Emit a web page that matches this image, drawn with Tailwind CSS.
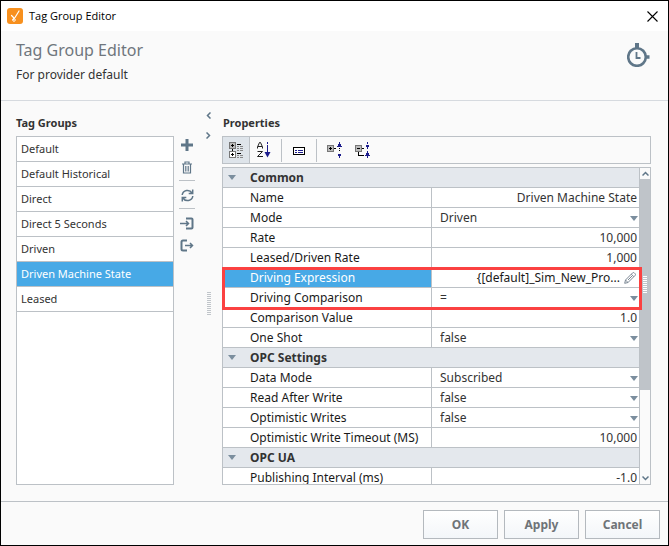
<!DOCTYPE html>
<html lang="en">
<head>
    <meta charset="UTF-8">
    <meta name="viewport" content="width=device-width, initial-scale=1.0">
    <title>Tag Group Editor</title>
    <script src="https://cdn.jsdelivr.net/npm/@tailwindcss/browser@4"></script>
</head>
<body class="h-screen flex flex-col border border-black bg-[#fafafa] font-['Noto_Sans',sans-serif] text-[12px] leading-[18px] text-[#333333] overflow-hidden">
    <!-- Title bar -->
    <div class="flex items-center h-[30px] shrink-0 bg-white pl-[6px] pr-[10px] text-black">
        <svg class="w-4 h-4" viewBox="0 0 16 16" fill="none">
            <rect width="16" height="16" rx="3" fill="#f7901e"/>
            <path d="M4.500 7.500l2.500 2.500M12 3L8 9.500M6 11.500l1.500-1.500" stroke="#fff" stroke-width="1.200" stroke-linecap="round"/>
            <circle cx="7" cy="12" r="1.300" stroke="#fff" stroke-width=".9"/>
        </svg>
        <span class="ml-[6px] font-['Open_Sans',sans-serif] text-[11px]">Tag Group Editor</span>
        <button type="button" aria-label="Close" class="ml-auto">
            <svg class="w-[11px] h-[11px]" viewBox="0 0 11 11" stroke="#000" stroke-width="1.100"><path d="M.5.5l10 10M10.500.5l-10 10"/></svg>
        </button>
    </div>

    <!-- Header -->
    <header class="flex items-start justify-between h-[70px] shrink-0 border-b border-[#d6dadf] pl-[15px] pr-[17px] pt-[7px]">
        <div>
            <h1 class="text-[16px] leading-6 text-[#6f767d]">Tag Group Editor</h1>
            <p class="mt-1">For provider default</p>
        </div>
        <svg class="w-6 h-6 mt-[5px]" viewBox="0 0 24 24" fill="none" stroke="#5f7688">
            <circle cx="10" cy="14" r="8.800" stroke-width="2.600"/>
            <path d="M10 0v5" stroke-width="4"/>
            <path d="M18 14h4.500" stroke-width="3.500"/>
            <path d="M9.500 9v6h4" stroke-width="1.800"/>
        </svg>
    </header>

    <!-- Content -->
    <main class="flex flex-1 min-h-0 pl-[15px] pr-[17px] pt-[13px] pb-4">
        <section class="flex flex-col w-[158px]">
            <h2 class="h-[22px] font-bold text-[11px]">Tag Groups</h2>
            <ul class="flex-1 min-h-0 border border-[#bcc1c6] bg-white text-[11px] leading-6 overflow-hidden">
                <li class="border-b border-[#bcc1c6]"><button type="button" class="block w-full px-1 text-left">Default</button></li>
                <li class="border-b border-[#bcc1c6]"><button type="button" class="block w-full px-1 text-left">Default Historical</button></li>
                <li class="border-b border-[#bcc1c6]"><button type="button" class="block w-full px-1 text-left">Direct</button></li>
                <li class="border-b border-[#bcc1c6]"><button type="button" class="block w-full px-1 text-left">Direct 5 Seconds</button></li>
                <li class="border-b border-[#bcc1c6]"><button type="button" class="block w-full px-1 text-left">Driven</button></li>
                <li class="border-b border-[#bcc1c6]"><button type="button" class="block w-full px-1 text-left bg-[#47a9e6] text-white">Driven Machine State</button></li>
                <li class="border-b border-[#bcc1c6]"><button type="button" class="block w-full px-1 text-left">Leased</button></li>
            </ul>
        </section>

        <!-- List actions -->
        <div class="flex flex-col w-4 ml-[5px] pt-[24px] text-[#5f7688]">
            <button type="button" aria-label="Add" class="flex justify-center items-center h-[14px]">
                <svg class="w-3 h-3" viewBox="0 0 12 12" stroke="currentColor" stroke-width="3"><path d="M6 0v12M0 6h12"/></svg>
            </button>
            <button type="button" aria-label="Delete" class="flex justify-center items-center h-[14px] mt-2">
                <svg class="w-3 h-[13px]" viewBox="0 0 12 13" fill="none" stroke="currentColor" stroke-width="1.200"><path d="M1 3h10M4 3V1h4v2M2.500 3v9h7V3M4.800 5v5.500M7.200 5v5.500"/></svg>
            </button>
            <div class="border-t border-[#bcc1c6] mt-[6px]"></div>
            <button type="button" aria-label="Refresh" class="flex justify-center items-center h-[14px] mt-[7px]">
                <svg class="w-[13px] h-[13px]" viewBox="0 0 13 13" fill="none" stroke="currentColor" stroke-width="1.500"><path d="M1.200 6A5.300 5.300 0 0 1 11 4M11.800 7A5.300 5.300 0 0 1 2 9M11.700.5v4h-4M1.300 12.500v-4h4"/></svg>
            </button>
            <div class="border-t border-[#bcc1c6] mt-[6px]"></div>
            <button type="button" aria-label="Import" class="flex justify-center items-center h-[14px] mt-[7px]">
                <svg class="w-[14px] h-[13px]" viewBox="0 0 14 13" fill="none" stroke="currentColor" stroke-width="2"><path d="M6 1.500h5.500q1 0 1 1v8q0 1-1 1H6"/><path d="M0 6.500h8M6 4l2.500 2.500L6 9" stroke-width="1.500"/></svg>
            </button>
            <button type="button" aria-label="Export" class="flex justify-center items-center h-[14px] mt-2">
                <svg class="w-[14px] h-[13px]" viewBox="0 0 14 13" fill="none" stroke="currentColor" stroke-width="2"><path d="M7 1.500H3q-1.500 0-1.500 1.500v7q0 1.500 1.500 1.500h4"/><path d="M5 6.500h7M10 4l2.500 2.500L10 9" stroke-width="1.500"/></svg>
            </button>
        </div>

        <!-- Splitter -->
        <div class="flex flex-col items-center w-[27px] -mt-[2px] text-[#5f7688]">
            <svg class="w-[5px] h-[7px]" viewBox="0 0 5 7" fill="none" stroke="currentColor" stroke-width="1.500"><path d="M4.500.5l-3 3 3 3"/></svg>
            <svg class="w-[5px] h-[7px] mt-[13px]" viewBox="0 0 5 7" fill="none" stroke="currentColor" stroke-width="1.500"><path d="M.5.5l3 3-3 3"/></svg>
            <div class="w-1 h-[23px] mt-[153px] bg-[repeating-linear-gradient(#c0c5ca_0px_1px,#fafafa_1px_2px)]"></div>
        </div>

        <section class="flex flex-col flex-1 min-w-0">
            <h2 class="h-[22px] pl-px font-bold text-[11px]">Properties</h2>

            <!-- Toolbar -->
            <div class="flex items-center h-7 shrink-0 border border-[#bcc1c6]">
                <button type="button" aria-label="Categorized" class="flex items-center justify-center w-[27px] h-full border-r border-[#bcc1c6] bg-[#dee4ea]">
                    <svg class="w-[15px] h-4" viewBox="0 0 15 16" shape-rendering="crispEdges" fill="none">
                        <rect x=".5" y=".5" width="6" height="6" fill="#bbb" stroke="#777"/>
                        <rect x=".5" y="9.500" width="6" height="6" fill="#fff" stroke="#777"/>
                        <path d="M2 3.500h3M3.500 2v3M2 12.500h3M3.500 11v3M3.500 7v2" stroke="#000"/>
                        <path d="M8 2.500h4M8 11.500h4" stroke="#000"/>
                        <path d="M8 4.500h2M11 4.500h3M8 6.500h2M11 6.500h3M8 8.500h2M11 8.500h3M8 13.500h2M11 13.500h3M8 15.500h2M11 15.500h3" stroke="#888"/>
                    </svg>
                </button>
                <button type="button" aria-label="Sort A to Z" class="flex items-center justify-center w-[27px] h-full">
                    <svg class="w-[14px] h-4" viewBox="0 0 14 16" fill="none">
                        <path d="M.5 6.500V5L2.500.5h1L5.500 5v1.500M1 4.500h4M.5 9.500h5L.5 14.500h5.500" stroke="#222"/>
                        <path d="M10.500 0v2M10.500 3v8" stroke="#1c1c8c"/><path d="M7.500 10h6l-3 5.500z" fill="#1c1c8c"/>
                    </svg>
                </button>
                <div class="ml-[4px] h-[23px] border-l border-[#bcc1c6]"></div>
                <button type="button" aria-label="Show description" class="flex items-center justify-center w-[34px] h-full pt-[2px]">
                    <svg class="w-3 h-2" viewBox="0 0 12 8" shape-rendering="crispEdges"><rect x=".5" y=".5" width="11" height="7" fill="#fff" stroke="#000"/><path d="M2 3.500h2M5 3.500h5M2 5.500h2M5 5.500h5" stroke="#1c1c8c"/></svg>
                </button>
                <div class="h-[23px] border-l border-[#bcc1c6]"></div>
                <button type="button" aria-label="Expand all" class="flex items-center justify-center w-9 h-full">
                    <svg class="w-4 h-4" viewBox="0 0 16 16" shape-rendering="crispEdges" fill="none">
                        <rect x=".5" y="3.500" width="6" height="6" fill="#bbb" stroke="#777"/><path d="M2 6.500h3M3.500 5v3M7 6.500h2M12.500 6v1M12.500 8v1" stroke="#000"/>
                        <path d="M12.500 0l2.500 4.500h-5zM12.500 16l2.500-4.500h-5z" fill="#1c1c8c"/>
                    </svg>
                </button>
                <button type="button" aria-label="Collapse all" class="flex items-center justify-center w-5 h-full">
                    <svg class="w-4 h-4" viewBox="0 0 16 16" shape-rendering="crispEdges" fill="none">
                        <rect x=".5" y="3.500" width="6" height="6" fill="#bbb" stroke="#777"/><path d="M2 6.500h3M7 6.500h2M3.500 10v3.500h5" stroke="#000"/>
                        <path d="M12.500 7l2.500-4.500h-5zM12.500 9l2.500 4.500h-5z" fill="#1c1c8c"/><path d="M12.500 0v2M12.500 14v2" stroke="#1c1c8c"/>
                    </svg>
                </button>
            </div>

            <!-- Property table -->
            <div class="relative flex flex-1 min-h-0 mt-[3px] border border-[#bcc1c6] bg-white">
                <div class="flex-1 min-w-0 overflow-hidden text-[#1a1a1a]">
                    <table class="w-full table-fixed border-separate border-spacing-0 leading-[19px]">
                        <colgroup><col class="w-[209px]"><col></colgroup>
                        <tbody id="properties"></tbody>
                    </table>
                </div>

                <!-- Scrollbar -->
                <div class="flex flex-col items-center w-[11px] border-l border-[#bcc1c6] bg-[#fafafa] text-[#5f7688]">
                    <svg class="w-[7px] h-[11px] shrink-0" viewBox="0 0 7 11" fill="none" stroke="currentColor" stroke-width="1.500"><path d="M.5 7.500l3-3 3 3"/></svg>
                    <div class="flex items-center justify-center w-full h-[211px] shrink-0 bg-[#bfc4c9]">
                        <div class="w-1 h-[17px] bg-[repeating-linear-gradient(#ffffff_0px_1px,#bfc4c9_1px_2px)]"></div>
                    </div>
                    <svg class="w-[7px] h-[11px] mt-auto shrink-0" viewBox="0 0 7 11" fill="none" stroke="currentColor" stroke-width="1.500"><path d="M.5 3.500l3 3 3-3"/></svg>
                </div>

                <!-- Highlight round the driving rows -->
                <div class="absolute -left-px right-2 top-[99px] h-[43px] border-3 border-[#fb4141] pointer-events-none"></div>
            </div>
        </section>
    </main>

    <!-- Footer -->
    <footer class="flex items-start justify-end gap-[6px] h-11 shrink-0 border-t border-[#bcc1c6] px-2 pt-2 font-bold text-[#6f7478]">
        <button type="button" class="w-[75px] h-[29px] border border-[#b4b9be] bg-linear-to-b from-white to-[#f3f6f9]">OK</button>
        <button type="button" class="w-[75px] h-[29px] border border-[#b4b9be] bg-linear-to-b from-white to-[#f3f6f9]">Apply</button>
        <button type="button" class="w-[75px] h-[29px] border border-[#b4b9be] bg-linear-to-b from-white to-[#f3f6f9]">Cancel</button>
    </footer>

    <script>
        const rows = [
            ['group', 'Common'],
            ['text', 'Name', 'Driven Machine State'],
            ['select', 'Mode', 'Driven'],
            ['text', 'Rate', '10,000'],
            ['text', 'Leased/Driven Rate', '1,000'],
            ['expr', 'Driving Expression', '{[default]_Sim_New_Pro...'],
            ['select', 'Driving Comparison', '='],
            ['text', 'Comparison Value', '1.0'],
            ['select', 'One Shot', 'false'],
            ['group', 'OPC Settings'],
            ['select', 'Data Mode', 'Subscribed'],
            ['select', 'Read After Write', 'false'],
            ['select', 'Optimistic Writes', 'false'],
            ['text', 'Optimistic Write Timeout (MS)', '10,000'],
            ['group', 'OPC UA'],
            ['text', 'Publishing Interval (ms)', '-1.0'],
        ];

        const arrow = '<svg class="block w-2 h-[5px]" viewBox="0 0 8 5"><path d="M0 0h8L4 5z" fill="#7b8e9e"/></svg>';
        const pencil = '<svg class="w-3 h-3" viewBox="0 0 12 12" fill="none" stroke="#7b8794"><path d="M.7 11.300l.8-3.300L8.700.8q.8-.6 1.500 0l1 1q.6.7 0 1.500L4 10.500zM7.300 2.200l2.500 2.500M1.500 8L4 10.500M4 8l4-4"/></svg>';

        function field(type, id, value) {
            if (type === 'select') {
                return `<div class="relative h-[19px]">
                    <select id="${id}" class="block appearance-none w-full h-[19px] pl-2 pt-px leading-[18px] text-[#333333]"><option>${value}</option></select>
                    <span class="absolute right-px top-[8px] pointer-events-none">${arrow}</span>
                </div>`;
            }
            if (type === 'expr') {
                return `<div class="flex items-center h-[19px] pr-[3px] gap-1">
                    <input id="${id}" type="text" value="${value}" class="flex-1 min-w-0 h-[19px] text-right text-[#1a1a1a]">
                    <button type="button" aria-label="Edit expression">${pencil}</button>
                </div>`;
            }
            return `<input id="${id}" type="text" value="${value}" class="block w-full h-[19px] pr-[2px] text-right text-[#333333]">`;
        }

        document.getElementById('properties').innerHTML = rows.map(([type, name, value], i) => {
            if (type === 'group') {
                return `<tr><th colspan="2" class="h-5 p-0 border-b border-[#bcc1c6] bg-[#e4e8ed] text-left text-[#333333]">
                    <div class="flex items-center pl-[5px]">${arrow}<span class="ml-[14px]">${name}</span></div>
                </th></tr>`;
            }
            const label = type === 'expr' ? 'bg-[#47a9e6] text-white' : '';
            return `<tr>
                <td class="h-5 p-0 pl-[27px] border-b border-r border-[#bcc1c6] whitespace-nowrap ${label}"><label class="block" for="prop${i}">${name}</label></td>
                <td class="h-5 p-0 border-b border-[#bcc1c6]">${field(type, 'prop' + i, value)}</td>
            </tr>`;
        }).join('');
    </script>
</body>
</html>
